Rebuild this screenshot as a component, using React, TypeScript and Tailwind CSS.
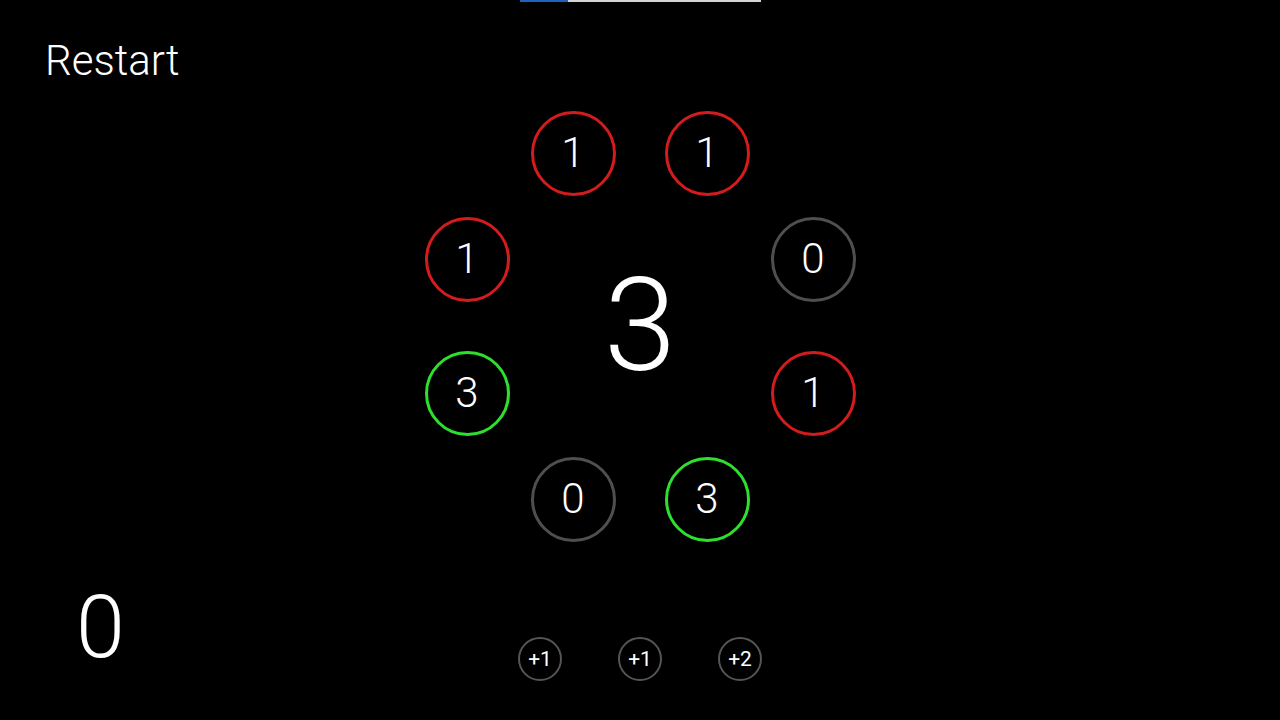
import React from 'react';

type Cell = { value: number; dx: number; dy: number };

// ring of counters, listed clockwise from the upper left
const cells: Cell[] = [
  { value: 1, dx: -67, dy: -173 },
  { value: 1, dx: 67, dy: -173 },
  { value: 0, dx: 173, dy: -67 },
  { value: 1, dx: 173, dy: 67 },
  { value: 3, dx: 67, dy: 173 },
  { value: 0, dx: -67, dy: 173 },
  { value: 3, dx: -173, dy: 67 },
  { value: 1, dx: -173, dy: -67 },
];

const ringColor = (v: number) => {
  if (v === 0) return 'border-[#4f4f4f]';
  if (v === 3) return 'border-[#2ee02e]';
  return 'border-[#d41c1c]';
};

const Counter = ({ cell }: { cell: Cell }) => (
  <div
    className={`absolute w-[85px] h-[85px] rounded-full border-[3px] ${ringColor(cell.value)} flex items-center justify-center text-[42px] font-light leading-none text-white`}
    style={{ left: 216 + cell.dx - 42.5, top: 216 + cell.dy - 42.5 }}
  >
    {cell.value}
  </div>
);

const Dial = () => (
  <div className="relative w-[432px] h-[432px] mx-auto">
    {cells.map((c, i) => (
      <Counter key={i} cell={c} />
    ))}
    <div className="absolute inset-0 flex items-center justify-center text-[130px] font-light leading-none text-white">
      3
    </div>
  </div>
);

const Bonus = ({ label }: { label: string }) => (
  <button className="w-[44px] h-[44px] rounded-full border-[2.5px] border-[#555555] flex items-center justify-center text-[21px] leading-none text-white">
    {label}
  </button>
);

export default function App() {
  return (
    <div
      className="w-[1280px] h-[720px] bg-black flex flex-col overflow-hidden text-white"
      style={{ fontFamily: 'Roboto, "Noto Sans", sans-serif' }}
    >
      <div className="flex justify-center">
        <div className="w-[241px] h-[2px] bg-[#d4d4d4] flex">
          <div className="w-[48px] h-full bg-[#1c64c0]" />
        </div>
      </div>
      <div className="pl-[45px] pt-[38px]">
        <button className="text-[42px] font-light leading-none text-white">Restart</button>
      </div>
      <div className="mt-[28px]">
        <Dial />
      </div>
      <div className="grid grid-cols-[1fr_auto_1fr] mt-[41px]">
        <div className="pl-[76px] text-[88px] font-light leading-none">0</div>
        <div className="flex gap-[56px] mt-[54px]">
          <Bonus label="+1" />
          <Bonus label="+1" />
          <Bonus label="+2" />
        </div>
        <div />
      </div>
    </div>
  );
}
